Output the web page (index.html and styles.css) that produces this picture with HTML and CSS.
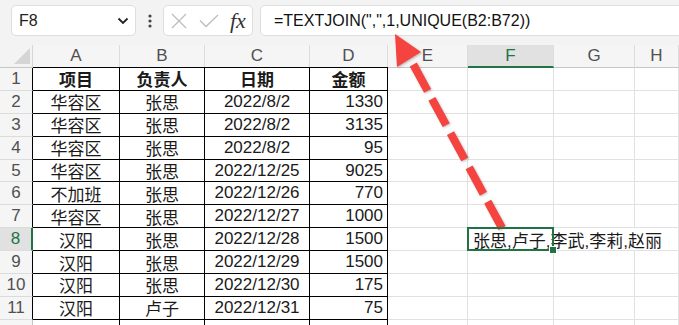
FILE: index.html
```html
<!DOCTYPE html>
<html lang="zh">
<head>
    <meta charset="UTF-8">
    <meta name="viewport" content="width=device-width, initial-scale=1.0">
    <title>TEXTJOIN UNIQUE</title>
    <link rel="stylesheet" href="styles.css">
</head>
<body>
    <div class="bar">
        <div class="namebox">
            <span>F8</span>
            <svg class="chev" width="12" height="8" viewBox="0 0 12 8"><path d="M1.5 1.5 L6 6 L10.5 1.5" fill="none" stroke="#222" stroke-width="1.8"/></svg>
        </div>
        <div class="more">
            <svg width="4" height="14" viewBox="0 0 4 14"><circle cx="2" cy="2" r="1.6" fill="#444"/><circle cx="2" cy="7" r="1.6" fill="#444"/><circle cx="2" cy="12" r="1.6" fill="#444"/></svg>
        </div>
        <div class="fxbox">
            <svg width="16" height="16" viewBox="0 0 16 16"><path d="M1 1 L15 15 M15 1 L1 15" stroke="#bdbdbd" stroke-width="1.3" fill="none"/></svg>
            <svg width="20" height="14" viewBox="0 0 20 14"><path d="M1 6.5 L7 12.5 L19 1" stroke="#bdbdbd" stroke-width="1.3" fill="none"/></svg>
            <span class="fx">fx</span>
        </div>
        <div class="formula">=TEXTJOIN(",",1,UNIQUE(B2:B72))</div>
    </div>

    <div class="sheet" id="sheet"></div>

    <svg class="arrow" width="679" height="325" viewBox="0 0 679 325">
        <line x1="502" y1="228" x2="413" y2="64" stroke="#f5433f" stroke-width="8" stroke-dasharray="30 9"/>
        <polygon points="395,34 397,67 421,52" fill="#f5433f"/>
    </svg>

    <script>
        const sheet = document.getElementById('sheet')
        const cols = ['A', 'B', 'C', 'D', 'E', 'F', 'G', 'H']
        const data = [
            ['项目', '负责人', '日期', '金额'],
            ['华容区', '张思', '2022/8/2', '1330'],
            ['华容区', '张思', '2022/8/2', '3135'],
            ['华容区', '张思', '2022/8/2', '95'],
            ['华容区', '张思', '2022/12/25', '9025'],
            ['不加班', '张思', '2022/12/26', '770'],
            ['华容区', '张思', '2022/12/27', '1000'],
            ['汉阳', '张思', '2022/12/28', '1500'],
            ['汉阳', '张思', '2022/12/29', '1500'],
            ['汉阳', '张思', '2022/12/30', '175'],
            ['汉阳', '卢子', '2022/12/31', '75'],
        ]

        let tag = `<div class="corner"><i></i></div>`
        cols.forEach(c => {
            tag += `<div class="colhead${c == 'F' ? ' sel' : ''}">${c}</div>`
        })

        // 12행은 화면 아래에 살짝만 보이므로 번호 없이 줄만 그림
        for (let r = 1; r <= 12; r++) {
            const row = data[r - 1]
            let cls = 'rowhead'
            if (row) cls += ' tb'
            if (r == 8) cls += ' sel'
            tag += `<div class="${cls}">${row ? r : ''}</div>`
            cols.forEach((c, i) => {
                let cell = 'cell'
                let text = ''
                if (row && i < 4) {
                    cell += ' tb'
                    if (r == 1) cell += ' head'
                    if (i == 3 && r > 1) cell += ' num'
                    text = row[i]
                } else if (r == 12 && i < 4) {
                    cell += ' tbside'
                }
                if (r == 8 && c == 'F') {
                    cell += ' active'
                    text = '张思,卢子,李武,李莉,赵丽<b class="handle"></b>'
                }
                if (r == 8 && c == 'G') cell += ' spill'
                tag += `<div class="${cell}">${text}</div>`
            })
        }
        sheet.innerHTML = tag
    </script>
</body>
</html>
```

FILE: styles.css
```css
body {
    margin: 0;
    width: 679px;
    height: 325px;
    overflow: hidden;
    position: relative;
    background: #fff;
    font-family: "Liberation Sans", "Noto Sans CJK SC", sans-serif;
}
.bar {
    height: 45px;
    box-sizing: border-box;
    padding: 5px 0 9px 11px;
    background: #f3f3f3;
    display: flex;
    align-items: stretch;
}
.namebox, .fxbox, .formula {
    background: #fff;
    border: 1px solid #dedede;
    border-radius: 5px;
    box-sizing: border-box;
}
.namebox {
    width: 125px;
    display: flex;
    align-items: center;
    justify-content: space-between;
    padding: 0 6px 0 7px;
    font-size: 16px;
    color: #222;
}
.more {
    width: 27px;
    display: flex;
    align-items: center;
    justify-content: center;
}
.fxbox {
    width: 90px;
    display: flex;
    align-items: center;
    padding-left: 7px;
    gap: 12px;
}
.fx {
    font-family: "Liberation Serif", serif;
    font-style: italic;
    font-size: 22px;
    color: #333;
    margin-left: -1px;
    line-height: 1;
}
.formula {
    flex: 1;
    margin-left: 7px;
    margin-right: -12px;
    padding-left: 13px;
    font-size: 16px;
    color: #111;
    display: flex;
    align-items: center;
    white-space: pre;
}

.sheet {
    display: grid;
    grid-template-columns: 33px 87px 85px 105px 78px 80px 86px 81px 1fr;
    grid-template-rows: 23px repeat(12, 22.9px);
    font-size: 17px;
    color: #1a1a1a;
}
.sheet > div {
    box-sizing: border-box;
    display: flex;
    align-items: center;
    justify-content: center;
    white-space: nowrap;
}
.corner {
    background: #f3f3f3;
    border-right: 1px solid #d6d6d6;
    border-bottom: 1px solid #c6c6c6;
    position: relative;
}
.corner i {
    position: absolute;
    right: 2px;
    bottom: 3px;
    border-style: solid;
    border-width: 0 0 16px 16px;
    border-color: transparent transparent #d5d5d5 transparent;
}
.colhead {
    background: #f5f5f5;
    color: #505050;
    border-right: 1px solid #dcdcdc;
    border-bottom: 1px solid #c6c6c6;
}
.colhead.sel {
    background: #e1e1e1;
    color: #217346;
    border-bottom: 2px solid #217346;
}
.rowhead {
    background: #f5f5f5;
    color: #505050;
    border-right: 1px solid #c6c6c6;
    border-bottom: 1px solid #dcdcdc;
}
.rowhead.tb {
    border-right-color: #000;
}
.rowhead.sel {
    background: #e1e1e1;
    color: #217346;
    border-right: 2px solid #217346;
}
.cell {
    border-right: 1px solid #e1e1e1;
    border-bottom: 1px solid #e1e1e1;
    overflow: visible;
}
.cell.tb {
    border-right-color: #000;
    border-bottom-color: #000;
}
.cell.tbside {
    border-right-color: #000;
}
.cell.head {
    font-weight: bold;
    box-shadow: 0 -1px 0 #000;
}
.cell.num {
    justify-content: flex-end;
    padding-right: 4px;
}
.cell.active {
    justify-content: flex-start;
    padding-left: 5px;
    position: relative;
    z-index: 2;
}
.cell.active::after {
    content: "";
    position: absolute;
    left: -1px;
    top: -1px;
    right: -1px;
    bottom: -1px;
    border: 2px solid #217346;
}
.handle {
    position: absolute;
    right: -4px;
    bottom: -4px;
    width: 6px;
    height: 6px;
    background: #217346;
    border: 1px solid #fff;
    z-index: 3;
}
.cell.spill {
    border-right-color: transparent;
}
.arrow {
    position: absolute;
    left: 0;
    top: 0;
    pointer-events: none;
    filter: drop-shadow(1px 1px 1px rgba(0, 0, 0, 0.25));
}
```
